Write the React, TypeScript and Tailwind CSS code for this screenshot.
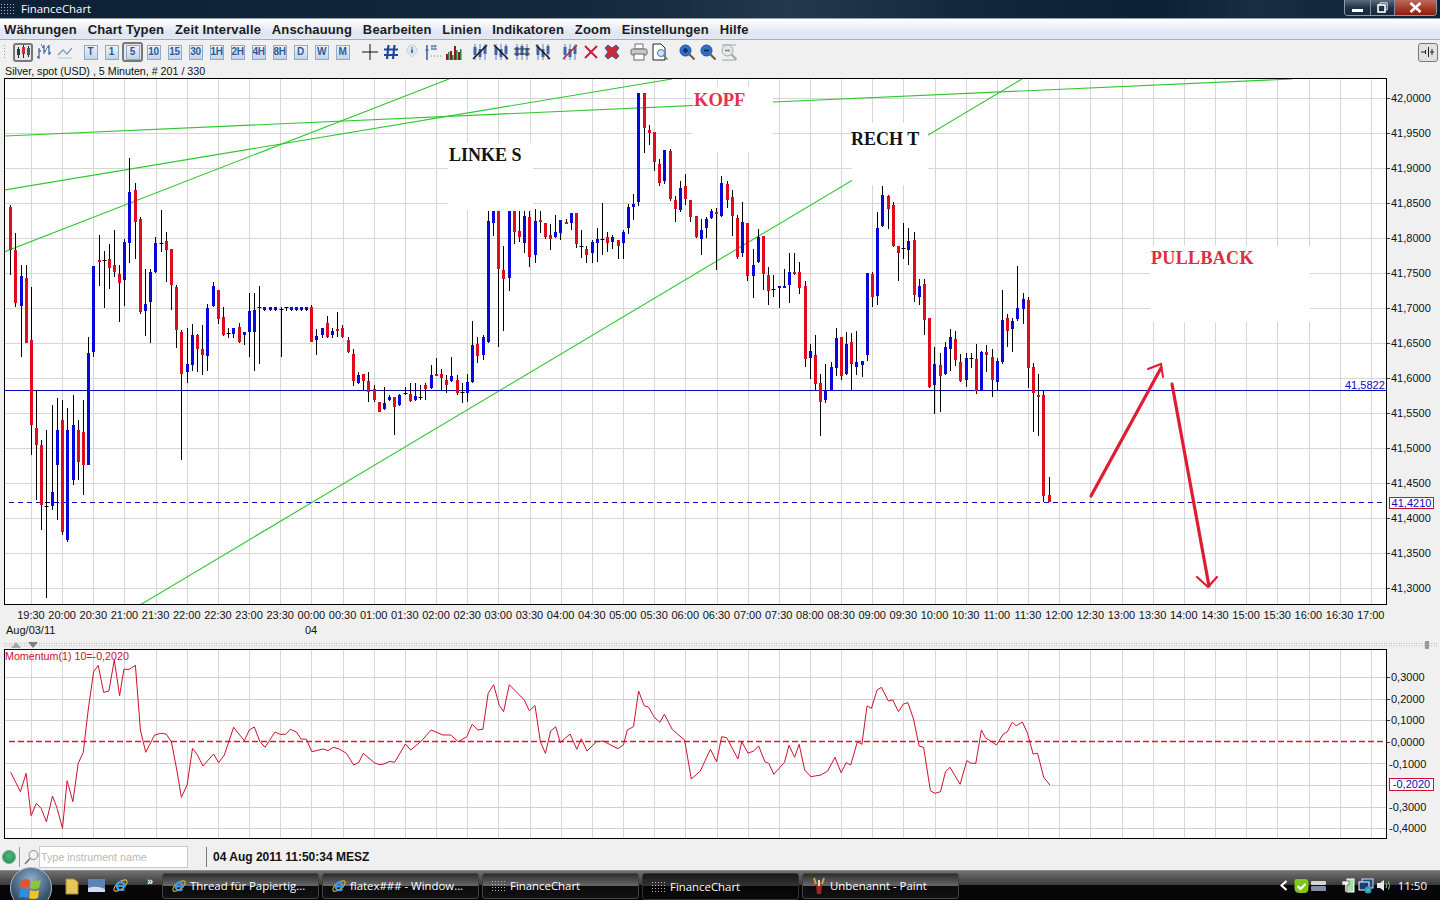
import React from "react";

type C = [number, number, number, number, number, string];
const candles: C[] = [
  [10,205,275,207,250,"r"],[15,233,307,250,303,"r"],[21,265,357,276,306,"b"],[26,265,343,278,343,"r"],[31,287,455,340,425,"r"],
  [36,390,500,428,445,"r"],[41,440,530,445,505,"r"],[46,430,598,506,506,"k"],[52,405,510,492,506,"b"],[57,398,520,430,465,"b"],
  [62,400,535,420,532,"r"],[67,408,542,430,540,"b"],[73,395,485,425,480,"b"],[78,420,480,430,462,"r"],[83,400,495,432,465,"r"],
  [88,337,465,353,465,"b"],[93,266,357,266,352,"b"],[99,235,286,260,262,"r"],[104,251,308,260,260,"k"],[109,244,289,259,268,"r"],
  [114,230,277,265,272,"r"],[119,265,322,274,283,"r"],[124,239,306,242,280,"b"],[129,158,263,192,243,"b"],[135,183,259,190,222,"r"],
  [140,217,314,219,312,"r"],[145,269,336,304,311,"b"],[150,269,343,272,302,"b"],[155,237,273,243,272,"b"],[161,210,252,243,243,"k"],
  [166,232,282,241,250,"r"],[171,249,310,249,285,"r"],[176,285,348,287,330,"r"],[181,330,460,332,374,"r"],[187,328,383,364,372,"b"],
  [192,324,371,335,365,"b"],[197,334,372,335,349,"r"],[202,325,375,349,355,"r"],[207,304,371,308,356,"b"],[213,282,307,286,306,"b"],
  [218,290,324,290,319,"r"],[223,307,336,317,335,"r"],[228,328,338,333,333,"k"],[233,328,338,328,334,"b"],[239,323,343,327,342,"r"],
  [244,332,345,332,335,"b"],[249,293,357,311,332,"b"],[254,293,371,310,332,"b"],[259,286,364,307,307,"k"],[264,307,311,307,310,"b"],
  [270,307,311,307,310,"b"],[275,307,311,307,310,"b"],[281,307,357,309,309,"k"],[286,307,311,307,307,"k"],[291,307,311,307,310,"b"],
  [296,307,311,307,310,"b"],[301,307,311,307,310,"b"],[306,307,311,307,310,"b"],[311,305,342,307,342,"r"],[316,329,355,336,340,"b"],
  [322,328,338,328,335,"b"],[327,316,338,323,337,"r"],[332,328,338,331,335,"b"],[337,312,337,329,330,"r"],[342,325,338,328,337,"r"],
  [348,337,353,340,352,"r"],[353,349,386,354,381,"r"],[358,372,384,375,383,"b"],[363,374,390,374,381,"r"],[368,372,402,381,392,"r"],
  [374,385,402,389,400,"r"],[379,402,412,402,412,"r"],[384,387,410,403,409,"b"],[389,395,401,397,400,"b"],[394,397,435,397,407,"r"],
  [399,394,406,395,405,"b"],[405,387,395,393,393,"k"],[410,383,402,394,401,"r"],[415,383,401,396,400,"b"],[420,385,400,397,397,"k"],
  [425,383,400,385,389,"r"],[431,365,389,375,388,"b"],[436,358,376,374,376,"r"],[441,369,390,374,378,"r"],[446,375,393,380,385,"r"],
  [451,357,382,376,381,"b"],[457,375,395,380,393,"r"],[462,383,403,392,392,"k"],[467,374,402,382,393,"b"],[472,321,383,345,382,"b"],
  [477,337,363,344,356,"r"],[483,335,360,337,355,"b"],[488,211,343,221,342,"b"],[493,211,236,211,223,"b"],[498,211,347,211,269,"r"],
  [503,246,331,270,279,"r"],[509,211,291,211,278,"b"],[514,211,244,211,232,"r"],[519,211,242,231,237,"r"],[524,211,253,216,243,"b"],
  [529,211,267,217,257,"r"],[535,209,263,221,255,"b"],[540,211,233,220,222,"r"],[545,223,239,223,237,"r"],[550,224,250,235,239,"r"],
  [555,215,238,232,237,"b"],[560,220,240,220,233,"b"],[566,219,224,222,223,"r"],[571,213,230,213,223,"b"],[576,213,248,213,244,"r"],
  [581,230,258,246,246,"k"],[586,246,263,249,255,"r"],[592,240,263,242,253,"b"],[597,228,262,239,243,"b"],[602,203,255,239,239,"k"],
  [607,232,252,237,243,"r"],[612,235,249,237,242,"b"],[618,240,259,240,246,"r"],[623,230,259,232,243,"b"],[628,204,234,207,228,"b"],
  [633,194,220,204,207,"b"],[638,93,206,93,202,"b"],[644,93,153,93,128,"r"],[649,125,145,130,133,"r"],[654,132,171,132,162,"r"],
  [659,159,186,164,183,"r"],[664,150,184,150,181,"b"],[670,149,201,151,199,"r"],[675,196,222,200,209,"r"],[680,181,212,188,210,"b"],
  [685,174,205,186,199,"r"],[690,200,222,200,217,"r"],[696,216,238,216,237,"r"],[701,219,255,230,239,"b"],[706,217,238,219,228,"b"],
  [711,209,219,211,218,"b"],[716,208,270,212,214,"r"],[721,176,217,183,216,"b"],[727,181,208,184,200,"r"],[732,190,236,197,216,"r"],
  [737,215,259,218,257,"r"],[742,202,257,222,253,"b"],[747,223,281,223,276,"r"],[753,249,298,265,276,"b"],[758,229,263,237,262,"b"],
  [763,236,290,236,274,"r"],[768,267,305,275,291,"r"],[773,275,297,289,289,"k"],[779,286,308,286,288,"b"],[784,269,288,286,288,"b"],
  [789,253,303,272,285,"b"],[794,253,275,272,274,"r"],[799,262,294,272,288,"r"],[805,281,367,286,359,"r"],[810,344,379,351,358,"b"],
  [815,335,391,355,384,"r"],[820,374,436,383,402,"r"],[825,364,403,390,400,"b"],[831,362,391,367,391,"b"],[836,328,376,338,368,"b"],
  [841,337,380,337,376,"r"],[846,332,375,344,374,"b"],[851,333,390,342,364,"r"],[856,331,375,362,367,"b"],[862,361,377,361,365,"b"],
  [867,273,361,273,355,"b"],[872,272,307,274,297,"r"],[877,212,305,228,296,"b"],[882,186,227,195,226,"b"],[888,195,229,196,209,"r"],
  [893,202,247,205,246,"r"],[898,246,281,246,253,"r"],[903,223,259,248,248,"k"],[908,228,265,241,250,"b"],[914,232,302,240,295,"r"],
  [919,279,305,286,297,"b"],[924,279,335,284,320,"r"],[929,318,388,318,387,"r"],[934,347,414,364,385,"b"],[940,353,412,365,376,"r"],
  [945,342,375,347,374,"b"],[950,329,371,337,349,"b"],[955,331,366,339,360,"r"],[960,354,382,362,381,"r"],[966,353,387,358,380,"b"],
  [971,353,368,358,358,"k"],[976,344,394,359,391,"r"],[981,351,391,352,390,"b"],[986,345,372,352,355,"r"],[992,349,397,357,380,"r"],
  [997,358,390,361,382,"b"],[1002,290,364,320,362,"b"],[1007,314,347,318,331,"r"],[1012,318,352,321,329,"b"],[1017,266,321,308,319,"b"],
  [1023,293,324,299,309,"b"],[1028,297,388,300,368,"r"],[1033,363,432,367,393,"r"],[1038,374,436,395,395,"r"],[1043,391,502,395,496,"r"],
  [1049,477,502,495,502,"r"],
];

const mom11: [number, number][] = [[30,517],[57,575],[73,520],[87,647],[102,610],[115,625],[130,665],[147,588],[160,625],[175,685],[188,542],[204,605],[219,490],[233,458],[247,330],[262,215],[275,196],[290,277],[305,273],[320,180],[335,287],[347,208],[362,208],[379,196],[393,390],[408,457],[433,405],[450,400],[465,402],[480,425],[495,510],[508,592],[524,555],[539,445],[553,465],[568,498],[598,462],[612,488],[628,465],[654,382],[684,422],[698,390],[712,381],[728,425],[742,442],[770,396],[784,403],[800,403],[813,388],[830,396],[843,417],[858,418],[873,455],[905,447],[918,452],[933,442],[950,447],[970,460],[990,495],[1005,487],[1017,460],[1048,488],[1062,494],[1075,492],[1092,484],[1105,487],[1135,432],[1150,450],[1178,425],[1207,390],[1240,405],[1262,405],[1283,425],[1307,410],[1322,373],[1338,390],[1352,388],[1367,280],[1382,254],[1398,316],[1410,335],[1426,254],[1468,300],[1482,332],[1498,317],[1513,425],[1527,460],[1542,393],[1556,380],[1568,425]];
const mom12: [number, number][] = [[0,308],[18,282],[30,328],[38,296],[48,333],[65,305],[77,303],[103,326],[113,315],[120,270],[131,260],[140,153],[150,197],[158,202],[168,232],[178,247],[186,223],[200,268],[210,283],[222,300],[234,417],[250,393],[268,328],[279,365],[288,290],[297,293],[317,357],[324,305],[335,340],[345,333],[354,318],[365,365],[372,370],[381,403],[400,367],[408,316],[418,352],[426,313],[436,390],[447,410],[465,405],[477,393],[490,352],[501,398],[510,368],[518,375],[530,305],[538,313],[547,198],[555,205],[565,150],[573,142],[585,183],[593,180],[603,215],[612,192],[620,188],[630,237],[640,318],[648,322],[660,452],[668,460],[678,455],[687,395],[695,382],[713,433],[725,362],[733,370],[741,370],[751,270],[758,293],[778,315],[790,282],[797,275],[806,247],[813,257],[824,246],[833,280],[843,342],[851,340],[862,412],[873,435]];

const momPoints = [
  ...mom11.map(([x, y]) => `${(x / 2.8).toFixed(1)},${(600 + y / 3).toFixed(1)}`),
  ...mom12.map(([x, y]) => `${(560 + x / 1.782).toFixed(1)},${(640 + y / 3).toFixed(1)}`),
].join(" ");

const gridX = Array.from({ length: 44 }, (_, k) => Math.round(31 + 31.16 * k) + 0.5);
const times = Array.from({ length: 44 }, (_, k) => {
  const m = 19 * 60 + 30 + k * 30;
  const h = Math.floor(m / 60) % 24;
  return `${String(h).padStart(2, "0")}:${m % 60 === 0 ? "00" : "30"}`;
});
const mainY = Array.from({ length: 15 }, (_, k) => 98.5 + 35 * k);
const mainLabels = ["42,0000","41,9500","41,9000","41,8500","41,8000","41,7500","41,7000","41,6500","41,6000","41,5500","41,5000","41,4500","41,4000","41,3500","41,3000"];
const momY = [0, 1, 2, 4, 5, 6, 7].map((k) => Math.round(677 + 21.6 * k) + 0.5);
const momLabels = ["0,3000","0,2000","0,1000","0,0000","-0,1000","","-0,3000","-0,4000"];
const timeButtons = ["T","1","5","10","15","30","1H","2H","4H","8H","D","W","M"];
const menus = ["Währungen","Chart Typen","Zeit Intervalle","Anschauung","Bearbeiten","Linien","Indikatoren","Zoom","Einstellungen","Hilfe"];

function Slot({ children }: { children: React.ReactNode }) {
  return <div className="w-[21px] h-[20px] flex items-center justify-center shrink-0">{children}</div>;
}

function ToolIcon({ children, w = 18, h = 18 }: { children: React.ReactNode; w?: number; h?: number }) {
  return <svg width={w} height={h} viewBox={`0 0 ${w} ${h}`} fill="none">{children}</svg>;
}

function LineTool({ flip, red }: { flip?: boolean; red?: boolean }) {
  return (
    <ToolIcon>
      <path d="M4 1v16M9 1v16M14 1v16" stroke="#5f80b8" strokeWidth="1" />
      <path d="M2.5 4h3v8h-3zM7.5 6h3v8h-3zM12.5 3h3v8h-3z" fill="#3f66a8" />
      {flip ? <path d="M2 16L16 2" stroke={red ? "#c0203a" : "#111"} strokeWidth="1.4" /> : <path d="M2 2l14 14" stroke="#111" strokeWidth="1.4" />}
    </ToolIcon>
  );
}

function Magnifier({ sign, faded }: { sign: "+" | "-"; faded?: boolean }) {
  const c = faded ? "#b5bcb8" : "#2f6fc6";
  return (
    <ToolIcon>
      {faded && <path d="M2 2h14M2 17h14" stroke="#9aa" strokeWidth="1" />}
      <circle cx="7.5" cy="7.5" r="5.5" fill={faded ? "#e4e8e6" : c} stroke={faded ? "#9aa" : "#1d4f9c"} />
      <path d="M5 7.5h5" stroke={faded ? "#888" : "#06264f"} strokeWidth="1.6" />
      {sign === "+" && <path d="M7.5 5v5" stroke="#06264f" strokeWidth="1.6" />}
      <path d="M11.5 11.5l5 5" stroke={faded ? "#9aa" : "#6b5a3a"} strokeWidth="2" />
    </ToolIcon>
  );
}

function IE({ size = 16 }: { size?: number }) {
  return (
    <svg width={size} height={size} viewBox="0 0 16 16" fill="none" className="shrink-0">
      <ellipse cx="8" cy="8" rx="7.5" ry="3.2" transform="rotate(-38 8 8)" stroke="#e7b63a" strokeWidth="1.1" />
      <path d="M13 9.5H6c.2 1.900 3 2.800 5.800.9v2.200c-3.600 1.600-8.200.5-8.200-4 0-3.500 3.300-6 6.500-4.700 2.200.9 3 3.100 2.900 5.600zM6.100 7.500h4.200c-.1-1.800-3.900-2-4.200 0z" fill="#3d9be9" />
    </svg>
  );
}

function Dots() {
  return <div className="w-[16px] h-[12px] shrink-0 bg-[radial-gradient(#aeb4ba_0.8px,transparent_1px)] bg-[length:3px_3px]" />;
}

function TaskButton({ icon, label, active }: { icon: React.ReactNode; label: string; active?: boolean }) {
  return (
    <div
      className={
        active
          ? "w-[157px] h-[27px] mt-[2px] flex items-center gap-[3px] pl-[8px] rounded-[3px] border border-[#333] bg-[linear-gradient(180deg,#191919_0%,#333_48%,#050505_50%,#0a0a0a_100%)] text-white pt-[1px]"
          : "w-[157px] h-[26px] mt-[2px] flex items-center gap-[3px] pl-[8px] rounded-[3px] border border-[#444] bg-[linear-gradient(180deg,#2e2e2e_0%,#666_48%,#0c0c0e_50%,#111114_100%)] text-white"
      }
    >
      {icon}
      <span className="text-[11.4px] leading-none whitespace-nowrap font-['Open_Sans','Noto_Sans',sans-serif]">{label}</span>
    </div>
  );
}

export default function App() {
  return (
    <div className="w-[1440px] h-[900px] overflow-hidden flex flex-col bg-[#f0f0f0] text-black font-['Liberation_Sans',Arial,sans-serif]">
      {/* Title bar */}
      <div className="h-[19px] shrink-0 flex items-start border-b border-[#9aa3ad] bg-[linear-gradient(90deg,#0d2035_0%,#12263b_30%,#162a40_45%,#26384e_55%,#14283e_66%,#0c1f33_80%,#1a2c42_87%,#0d2035_100%)]">
        <div className="flex items-center gap-[5px] h-[18px]">
          <Dots />
          <span className="text-[11.4px] text-white font-['Open_Sans',sans-serif] leading-none">FinanceChart</span>
        </div>
        <div className="ml-auto mr-[3px] h-[16px] w-[93px] flex rounded-b-[4px] border border-t-0 border-[#8d99a6] overflow-hidden">
          <div className="w-[26px] flex items-center justify-center border-r border-[#7f8b98] bg-[linear-gradient(180deg,#5b6b7d,#22344a_50%,#16283c)]">
            <div className="w-[11px] h-[3px] bg-white mt-[6px]" />
          </div>
          <div className="w-[24px] flex items-center justify-center border-r border-[#7f8b98] bg-[linear-gradient(180deg,#5b6b7d,#22344a_50%,#16283c)]">
            <svg width="11" height="11" viewBox="0 0 11 11" fill="none"><path d="M3 2.500V.8h7.200v7H8" stroke="#dfe6ee" /><rect x="1" y="3" width="7" height="7" stroke="#fff" strokeWidth="1.6" /></svg>
          </div>
          <div className="flex-1 flex items-center justify-center bg-[linear-gradient(180deg,#b96a5c,#a8402c_50%,#8a1e10)]">
            <svg width="13" height="11" viewBox="0 0 13 11"><path d="M1.500 1l10 9M11.500 1l-10 9" stroke="#fff" strokeWidth="2.6" /></svg>
          </div>
        </div>
      </div>

      {/* Menu */}
      <div className="h-[21px] shrink-0 flex items-center gap-[10.8px] pl-[4px] border-b border-[#a9adb3] bg-[linear-gradient(180deg,#ffffff,#dfe5f3_70%,#e4e8f4)] text-[13px] font-bold text-[#1b1b1b] tracking-[0.15px]">
        {menus.map((m) => (
          <span key={m} className="whitespace-nowrap leading-none">{m}</span>
        ))}
      </div>

      {/* Toolbar */}
      <div className="h-[23px] shrink-0 flex items-center pt-[1px]">
        <div className="w-[3px] h-[16px] ml-[3px] mr-[7px] bg-[radial-gradient(#9a9a9a_0.7px,transparent_0.8px)] bg-[length:3px_3px]" />
        <div className="w-[20px] h-[19px] flex items-center justify-center rounded-[3px] border-2 border-[#77787a] bg-[#e6e6e6]">
          <svg width="15" height="14" viewBox="0 0 15 14"><path d="M2.500 2v11M7.500 0v13M12.500 1v11" stroke="#222" /><rect x="1" y="4" width="3" height="6" fill="#3a3a3a" /><rect x="6" y="2" width="3" height="7" fill="#c03040" /><rect x="11" y="3" width="3" height="7" fill="#555" /></svg>
        </div>
        <Slot>
          <svg width="16" height="16" viewBox="0 0 16 16" fill="none" stroke="#3f66a8" strokeWidth="1.3"><path d="M3 4v11M1 13h2M3 7h2M8 1v9M6 3h2M8 7h2M13 1v10M11 3h2M13 9h2" /><path d="M5 1h1M10 5h1" /></svg>
        </Slot>
        <Slot>
          <svg width="16" height="14" viewBox="0 0 16 14" fill="none"><path d="M1 10l5-5 4 4 5-6" stroke="#7f9bc4" strokeWidth="1.3" /><path d="M1 13h14" stroke="#bcc8d8" /></svg>
        </Slot>
        <div className="w-[5px] shrink-0" />
        {timeButtons.map((t) => (
          <Slot key={t}>
            <div className={t === "5" ? "w-[21px] h-[20px] flex items-center justify-center rounded-[3px] border-2 border-[#77787a] bg-[#e6e6e6]" : "contents"}>
              <div className="w-[14px] h-[15px] flex items-center justify-center border border-[#8fa9cd] bg-[linear-gradient(180deg,#eef3fa,#c3d3e8)] text-[10px] font-bold text-[#2f5a98] leading-none tracking-[-0.3px]">{t}</div>
            </div>
          </Slot>
        ))}
        <div className="w-[6px] shrink-0" />
        <Slot><ToolIcon><path d="M9 1v16M1 9h16" stroke="#111" strokeWidth="1" /></ToolIcon></Slot>
        <Slot><ToolIcon><path d="M6.500 2L5 16M12.500 2L11 16M2 6.500h14M2 12h14" stroke="#174a9c" strokeWidth="2.2" /></ToolIcon></Slot>
        <Slot>
          <ToolIcon>
            <path d="M9 2a5 5 0 0 1 3 9l-3 3-3-3a5 5 0 0 1 3-9z" fill="#dfe6f1" stroke="#c7cfdb" />
            <path d="M9 4.500v1M9 6.500v3.500" stroke="#2f4f9a" strokeWidth="1.6" />
          </ToolIcon>
        </Slot>
        <Slot>
          <ToolIcon>
            <path d="M3 2v15M1.500 7h3" stroke="#3f66a8" strokeWidth="1.6" />
            <path d="M7 3h6M7 6h6M8 2v5M11 2v5" stroke="#3f66a8" strokeWidth="0.9" />
            <path d="M7 13h1M10 13h1M13 13h1M16 13h1" stroke="#777" />
          </ToolIcon>
        </Slot>
        <Slot>
          <ToolIcon>
            <path d="M1 17v-6h2v6zM5 17V8h2v9zM9 17V3h2v14zM13 17V9h2v8z" fill="#8c1a20" />
            <path d="M3 17v-8h1.500v8zM7 17v-5h1.500v5zM11 17V7h1.500v10zM15 17V6h1.500v11z" fill="#1e8a3a" />
          </ToolIcon>
        </Slot>
        <div className="w-[5px] shrink-0" />
        <Slot><LineTool flip /></Slot>
        <Slot><LineTool /></Slot>
        <Slot>
          <ToolIcon>
            <path d="M4 1v16M9 1v16M14 1v16" stroke="#5f80b8" />
            <path d="M2.500 4h3v9h-3zM7.500 3h3v9h-3zM12.500 5h3v8h-3z" fill="#3f66a8" />
            <path d="M1 6h16M1 11h16" stroke="#333" strokeWidth="1" />
          </ToolIcon>
        </Slot>
        <Slot><LineTool /></Slot>
        <div className="w-[6px] shrink-0" />
        <Slot><LineTool flip red /></Slot>
        <Slot><ToolIcon><path d="M3 3l12 12M15 3L3 15" stroke="#c8203c" strokeWidth="2" /></ToolIcon></Slot>
        <Slot>
          <ToolIcon>
            <path d="M5 2l4 3 4-3 3 3-3 4 3 4-3 3-4-3-4 3-3-3 3-4-3-4z" fill="#c8283c" stroke="#46608c" strokeWidth="1" />
          </ToolIcon>
        </Slot>
        <div className="w-[6px] shrink-0" />
        <Slot>
          <ToolIcon>
            <rect x="5" y="1" width="8" height="5" fill="#fff" stroke="#777" />
            <rect x="1" y="6" width="16" height="6" rx="1.500" fill="#c9c9c9" stroke="#666" />
            <rect x="4" y="11" width="10" height="6" fill="#fff" stroke="#666" />
          </ToolIcon>
        </Slot>
        <Slot>
          <ToolIcon>
            <path d="M2 1h8l4 4v12H2z" fill="#fff" stroke="#222" />
            <circle cx="10" cy="10" r="3.500" fill="#cfe3f7" stroke="#3e78b8" />
            <path d="M12.500 12.500l4 4" stroke="#6a7a5a" strokeWidth="1.6" />
          </ToolIcon>
        </Slot>
        <div className="w-[6px] shrink-0" />
        <Slot><Magnifier sign="+" /></Slot>
        <Slot><Magnifier sign="-" /></Slot>
        <Slot><Magnifier sign="-" faded /></Slot>
        <div className="ml-auto mr-[2px] w-[20px] h-[19px] flex items-center justify-center rounded-[3px] border border-[#77787a] bg-[#e2e2e2]">
          <svg width="14" height="12" viewBox="0 0 14 12" fill="none" stroke="#222"><path d="M0 6h5M7.500 1v10M9 6h4M11 3v6M4.500 4v4" /></svg>
        </div>
      </div>

      {/* Info line */}
      <div className="h-[15px] shrink-0 pl-[5px] pt-px text-[10.7px] leading-[15px] text-[#111] whitespace-pre">Silver, spot (USD) , 5 Minuten, # 201 / 330</div>

      {/* Main chart */}
      <div className="h-[527px] shrink-0 flex pl-[4px]">
        <div className="w-[1383px] h-[527px] shrink-0 border border-black bg-white">
          <svg width="1381" height="525" viewBox="5 79 1381 525" className="block">
            {gridX.map((x) => <line key={x} x1={x} x2={x} y1={79} y2={604} stroke="#d6d6d6" />)}
            {mainY.map((y) => <line key={y} x1={5} x2={1386} y1={y} y2={y} stroke="#d6d6d6" />)}
            <g stroke="#2ec82e" strokeWidth="1.1">
              <line x1={4} y1={252} x2={449} y2={79} />
              <line x1={4} y1={190} x2={672} y2={79} />
              <line x1={4} y1={136} x2={1292} y2={79} />
              <line x1={140} y1={605} x2={1022} y2={79} />
            </g>
            <rect x={448} y={143} width={85} height={67} fill="#fff" />
            <rect x={693} y={87} width={80} height={65} fill="#fff" />
            <rect x={852} y={123} width={76} height={62} fill="#fff" />
            <rect x={1150} y={246} width={160} height={76} fill="#fff" />
            <line x1={5} x2={1386} y1={390.5} y2={390.5} stroke="#0a0ac0" />
            <line x1={9} x2={1386} y1={502.5} y2={502.5} stroke="#0a0ac0" strokeDasharray="5 4" />
            {candles.map(([x, wt, wb, bt, bb, c]) => (
              <g key={x}>
                <line x1={x + 0.5} x2={x + 0.5} y1={wt} y2={wb} stroke="#000" />
                {c === "k" ? (
                  <line x1={x - 1.5} x2={x + 2.5} y1={bt + 0.5} y2={bt + 0.5} stroke="#000" />
                ) : (
                  <rect x={x - 1} y={bt} width={3} height={Math.max(bb - bt, 2)} fill={c === "b" ? "#0808dc" : "#e00c1c"} />
                )}
              </g>
            ))}
            <g fill="none" stroke="#e01c30" strokeWidth="3.2" strokeLinecap="round">
              <path d="M1091 496L1161 368" />
              <path d="M1148 369l13-5 2 13" strokeWidth="2" />
              <path d="M1172 384L1209 586" />
              <path d="M1197 577l11 10 9-10" strokeWidth="2.2" />
            </g>
            <text x={449} y={161} fill="#101418" className="font-['Liberation_Serif',serif] font-bold text-[18px]">LINKE S</text>
            <text x={694} y={106} fill="#e8304c" className="font-['Liberation_Serif',serif] font-bold text-[18.5px]">KOPF</text>
            <text x={851} y={145} fill="#101418" className="font-['Liberation_Serif',serif] font-bold text-[18px]">RECH T</text>
            <text x={1151} y={264} fill="#e02a40" className="font-['Liberation_Serif',serif] font-bold text-[18px]" letterSpacing="0.35">PULLBACK</text>
            <text x={1345} y={389} fill="#0a0ac0" className="text-[11px]">41,5822</text>
          </svg>
        </div>
        <div className="relative flex-1 pt-[2.5px] text-[11px] text-[#111]">
          {mainLabels.map((l) => (
            <div key={l} className="h-[35px] flex items-center">
              <span className="w-[3px] h-px bg-[#553038] mr-px" />
              <span className="leading-none">{l}</span>
            </div>
          ))}
          <div className="absolute left-[2px] top-[419px] w-[45px] h-[12px] flex items-center justify-center border border-[#d01030] bg-white text-[11px] leading-none text-[#0a0ac0]">41,4210</div>
        </div>
      </div>

      {/* Time axis */}
      <div className="h-[17px] shrink-0 flex items-start pt-[5px] pl-[15.4px] text-[11px] text-[#111]">
        {times.map((t, i) => (
          <div key={i} className="w-[31.16px] shrink-0 text-center leading-none">{t}</div>
        ))}
      </div>
      <div className="h-[16px] shrink-0 flex items-center text-[11px] leading-none text-[#111]">
        <span className="ml-[6px] w-[299px]">Aug/03/11</span>
        <span>04</span>
      </div>

      {/* Divider */}
      <div className="h-[11px] shrink-0 pt-[4px]">
        <div className="h-[6px] mx-[3px] flex items-center gap-[7px] pl-[8px] bg-[radial-gradient(#9c9c9c_0.6px,transparent_0.7px)] bg-[length:2.5px_2.5px]">
          <svg width="10" height="6" viewBox="0 0 10 6"><path d="M0 6L5 0l5 6z" fill="#a8a8a8" /></svg>
          <svg width="10" height="6" viewBox="0 0 10 6"><path d="M0 0h10L5 6z" fill="#808080" /></svg>
          <svg width="6" height="8" viewBox="0 0 6 8" className="ml-auto mr-[7px]"><rect x="1" y="0" width="4" height="8" fill="#9a9a9a" /></svg>
        </div>
      </div>

      {/* Momentum */}
      <div className="h-[190px] shrink-0 flex pl-[4px]">
        <div className="w-[1383px] h-[190px] shrink-0 border border-black bg-white">
          <svg width="1381" height="188" viewBox="5 650 1381 188" className="block">
            {gridX.map((x) => <line key={x} x1={x} x2={x} y1={650} y2={838} stroke="#d8d8d8" />)}
            {momY.map((y) => <line key={y} x1={5} x2={1386} y1={y} y2={y} stroke="#d0d0d0" />)}
            <line x1={9} x2={1386} y1={741.5} y2={741.5} stroke="#ee1030" strokeWidth="1.4" strokeDasharray="6 3" />
            <polyline points={momPoints} fill="none" stroke="#d0102c" strokeWidth="1" />
            <text x={5} y={660} fill="#c8102c" className="text-[10.7px]">Momentum(1) 10=-0,2020</text>
          </svg>
        </div>
        <div className="relative flex-1 pt-[18px] text-[11px] text-[#111]">
          {momLabels.map((l, i) => (
            <div key={i} className="h-[21.6px] flex items-center">
              {l.startsWith("-") ? <span className="ml-[2px] leading-none">{l}</span> : l ? (
                <>
                  <span className="w-[3px] h-px bg-[#333] mr-px" />
                  <span className="leading-none">{l}</span>
                </>
              ) : null}
            </div>
          ))}
          <div className="absolute left-[2px] top-[129px] w-[45px] h-[13px] flex items-center justify-center border border-[#d01030] bg-white text-[11px] leading-none text-[#0a0ac0]">-0,2020</div>
        </div>
      </div>

      {/* Status bar */}
      <div className="h-[31px] shrink-0 flex items-center pl-[2px] pt-[5px]">
        <div className="w-[14px] h-[14px] rounded-full bg-[radial-gradient(circle_at_50%_40%,#4fb87a,#1f8a4f)] border border-[#6aa884]" />
        <div className="w-px h-[20px] bg-[#9a9a9a] ml-[3px] mr-[4px]" />
        <svg width="15" height="17" viewBox="0 0 15 17" fill="none"><circle cx="9.500" cy="6" r="4.500" stroke="#8a8a8a" /><path d="M6 9.500L1 15" stroke="#777" strokeWidth="1.6" /></svg>
        <div className="w-[149px] h-[22px] flex items-center pl-[1px] border border-[#c9c9c9] bg-white text-[10.7px] text-[#b9b9b9] leading-none">Type instrument name</div>
        <div className="w-px h-[20px] bg-[#777] ml-[18px] mr-[6px]" />
        <span className="text-[12px] font-bold text-[#111] leading-none whitespace-nowrap">04 Aug 2011 11:50:34 MESZ</span>
      </div>

      {/* Taskbar */}
      <div className="relative h-[30px] shrink-0 flex items-start border-t border-[#8a8a8a] bg-[linear-gradient(180deg,#707070_0%,#3a3a3a_48%,#08080b_50%,#050507_100%)]">
        <div className="absolute left-[10px] -top-[4px] w-[42px] h-[42px] rounded-full border border-[#aebccb] bg-[radial-gradient(circle_at_50%_30%,#8fb0cc,#3f5b76_58%,#142230)] flex items-center justify-center">
          <svg width="24" height="23" viewBox="0 0 24 23">
            <path d="M2 4q4-3 9-1l-1 8q-5-2-9 0z" fill="#e8512a" />
            <path d="M13 3q4 2 9 0l-2 8q-4 2-9 0z" fill="#8cc63e" />
            <path d="M1 13q4-2 9 0l-1 8q-5-2-9 0z" fill="#2d8fe0" />
            <path d="M11 13q5 2 9 0l-1 8q-5 2-9 0z" fill="#f5c02c" />
          </svg>
        </div>
        <div className="ml-[65px] w-[97px] h-[29px] flex items-center">
          <svg width="14" height="18" viewBox="0 0 14 18" className="mr-[9px]"><path d="M1 2h8l4 3v12H1z" fill="#e6c65c" stroke="#a98a2e" /></svg>
          <svg width="17" height="13" viewBox="0 0 17 13" className="mr-[7px]"><rect width="17" height="13" fill="#5c83b5" /><path d="M0 9q8-3 17 1v3H0z" fill="#cfdcf0" /></svg>
          <IE size={17} />
          <span className="ml-[18px] -mt-[8px] text-[11px] font-bold text-white leading-none">»</span>
        </div>
        <div className="flex gap-[3px]">
          <TaskButton icon={<IE size={16} />} label="Thread für Papiertig..." />
          <TaskButton icon={<IE size={16} />} label="flatex### - Window..." />
          <TaskButton icon={<Dots />} label="FinanceChart" />
          <TaskButton active icon={<Dots />} label="FinanceChart" />
          <TaskButton
            icon={
              <svg width="16" height="18" viewBox="0 0 16 18" className="shrink-0">
                <path d="M5 8h6l-1 9H6z" fill="#a52028" />
                <path d="M8 9V3" stroke="#f0d8a0" strokeWidth="2" />
                <path d="M3 1l2 6M13 1l-2 6" stroke="#e89830" strokeWidth="2" />
              </svg>
            }
            label="Unbenannt - Paint"
          />
        </div>
        <div className="ml-auto mr-[13px] h-[29px] flex items-center">
          <svg width="7" height="11" viewBox="0 0 7 11" fill="none"><path d="M6.500 1L1.500 5.500 6.500 10" stroke="#fff" strokeWidth="2" /></svg>
          <svg width="17" height="16" viewBox="0 0 16 16" className="ml-[6px]">
            <path d="M3 1h9q3 0 3 4v5q0 5-4 5H6q-5 0-5-5V4q0-3 2-3z" fill="#7fc41f" />
            <path d="M4 8l3 3 5-5" fill="none" stroke="#fff" strokeWidth="2" />
          </svg>
          <svg width="15" height="12" viewBox="0 0 15 12" className="ml-[1px]"><rect y="1" width="15" height="4" rx="1" fill="#d6d6d6" /><rect y="6" width="15" height="5" rx="1" fill="#7f8fa8" /></svg>
          <svg width="14" height="15" viewBox="0 0 14 15" className="ml-[15px]">
            <rect x="6" y="1" width="7" height="13" fill="#9fe0a8" stroke="#fff" />
            <path d="M1 3h7v4H6v7H4V7H1z" fill="#f2f2f2" stroke="#4a3a2a" strokeWidth="0.6" />
          </svg>
          <svg width="16" height="16" viewBox="0 0 16 16" className="ml-[3px]">
            <rect x="4" y="1" width="11" height="9" fill="#1f4a8a" stroke="#cfe0f5" />
            <rect x="1" y="4" width="10" height="8" fill="#183c74" stroke="#fff" />
            <circle cx="10" cy="12" r="3.500" fill="#2e9ad0" />
            <path d="M8 11l2-1 2 2-2 2z" fill="#5cb85c" />
          </svg>
          <svg width="15" height="13" viewBox="0 0 15 13" fill="none" className="ml-[2px]">
            <path d="M1 4h3l4-3v11L4 9H1z" fill="#e8e8e8" />
            <path d="M10 4q1.500 2.500 0 5M12.500 2.500q2 4 0 8" stroke="#7fd07f" />
          </svg>
          <span className="ml-[7px] text-[11.5px] text-white leading-none font-['Open_Sans',sans-serif]">11:50</span>
        </div>
      </div>
    </div>
  );
}
